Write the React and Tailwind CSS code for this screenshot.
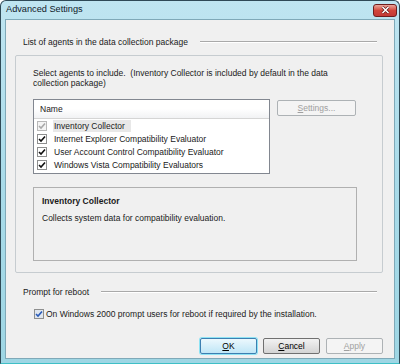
import React from "react";

const agents = [
  { name: "Inventory Collector", locked: true },
  { name: "Internet Explorer Compatibility Evaluator" },
  { name: "User Account Control Compatibility Evaluator" },
  { name: "Windows Vista Compatibility Evaluators" },
];

const CheckBox = ({ disabled, blue }) => (
  <span
    className={`flex shrink-0 items-center justify-center w-[10px] h-[10px] border ${
      disabled ? "border-[#b8b8b8] bg-[#f4f4f4]" : blue ? "border-[#8e8f8f] bg-[#dfe6ee]" : "border-[#8e8f8f] bg-white"
    }`}
  >
    <svg width="8" height="8" viewBox="0 0 8 8">
      <path
        d="M1 4 L3 6 L7 1.5"
        fill="none"
        stroke={disabled ? "#a8a8a8" : blue ? "#2a5bb8" : "#111"}
        strokeWidth="1.6"
      />
    </svg>
  </span>
);

const GroupTitle = ({ children }) => (
  <div className="flex items-center h-[14px] pl-[8px] pr-[6px]">
    <span className="whitespace-nowrap">{children}</span>
    <div className="flex-1 ml-[12px] h-[2px] border-t border-[#a9a9a9] border-b-white border-b" />
  </div>
);

const DialogButton = ({ children, kind }) => {
  const styles = {
    default: "border-[#3c7fb1] bg-gradient-to-b from-[#ecf8fd] to-[#bfe6f6] shadow-[0_0_0_1px_#8ee3f4] text-black",
    normal: "border-[#707070] bg-gradient-to-b from-[#f2f2f2] to-[#d4d4d4] text-black",
    disabled: "border-[#adb2b5] bg-[#f4f4f4] text-[#a0a0a0]",
  };
  return (
    <button className={`w-[57px] h-[16px] rounded-[2px] border ${styles[kind]} flex items-center justify-center text-[8.5px] leading-none`}>
      {children}
    </button>
  );
};

export default function App() {
  return (
    <div
      className="w-[400px] h-[364px] flex flex-col bg-gradient-to-b from-[#bfe5f1] via-[#a9dbe9] to-[#9ed6e4] border border-[#2f4a57] border-b-[#3fbfc6] rounded-t-[6px] overflow-hidden text-[#1a1a1a]"
      style={{ fontFamily: '"Liberation Sans", Arial, sans-serif' }}
    >
      {/* title bar */}
      <div className="h-[18px] flex items-center pl-[5px] pr-[2px] shrink-0">
        <span className="text-[9.2px] text-[#10202a]">Advanced Settings</span>
        <div className="ml-auto w-[24px] h-[13px] rounded-[3px] border border-[#6e1d1d] bg-gradient-to-b from-[#e9a59b] via-[#d1453b] to-[#c33a36] flex items-center justify-center">
          <svg width="9" height="8" viewBox="0 0 9 8">
            <path d="M1.5 1 L7.5 7 M7.5 1 L1.5 7" stroke="#5a1010" strokeWidth="2.8" />
            <path d="M1.5 1 L7.5 7 M7.5 1 L1.5 7" stroke="white" strokeWidth="1.6" />
          </svg>
        </div>
      </div>

      {/* client area */}
      <div className="flex-1 mx-[4px] mb-[4px] bg-[#f0f0f0] border border-[#7fa9b8] flex flex-col pt-[15px] pl-[9px] pr-[11px] pb-[4px] text-[8.5px] leading-[10px]">
        <GroupTitle>List of agents in the data collection package</GroupTitle>

        <div className="mt-[6px] h-[218px] border border-[#c6ccd0] rounded-[2px] flex flex-col pt-[13px] px-[17px]">
          <p className="leading-[9.5px]">
            Select agents to include.&nbsp; (Inventory Collector is included by default in the data
            collection package)
          </p>

          <div className="mt-[11px] flex gap-[7px] items-start">
            <div className="w-[237px] h-[75px] border border-[#828790] bg-white flex flex-col">
              <div className="h-[19px] shrink-0 flex items-center pl-[6px] bg-gradient-to-b from-white via-white to-[#f1f2f4] border-b border-[#d5d5d5]">
                Name
              </div>
              <div className="flex flex-col">
                {agents.map((a) => (
                  <div key={a.name} className="h-[13px] flex items-center pl-[3px]">
                    <CheckBox disabled={a.locked} />
                    <span className={`ml-[6px] px-[1px] h-[12px] flex items-center whitespace-nowrap ${a.locked ? "bg-[#e8e8e8] pr-[6px]" : ""}`}>
                      {a.name}
                    </span>
                  </div>
                ))}
              </div>
            </div>
            <button className="mt-[1px] w-[79px] h-[16px] rounded-[2px] border border-[#adb2b5] bg-[#f4f4f4] text-[#a0a0a0] flex items-center justify-center text-[8.5px]">
              <span>
                <u>S</u>ettings...
              </span>
            </button>
          </div>

          <div className="mt-[13px] w-[324px] h-[74px] border border-[#b0b0b0] pt-[8px] px-[8px]">
            <div className="font-bold">Inventory Collector</div>
            <div className="mt-[7px]">Collects system data for compatibility evaluation.</div>
          </div>
        </div>

        <div className="mt-[12px]">
          <GroupTitle>Prompt for reboot</GroupTitle>
        </div>

        <div className="mt-[9px] flex items-center pl-[19px] h-[11px]">
          <CheckBox blue />
          <span className="ml-[2px] whitespace-nowrap">On Windows 2000 prompt users for reboot if required by the installation.</span>
        </div>

        <div className="mt-auto flex justify-end gap-[6px]">
          <DialogButton kind="default">
            <span><u>O</u>K</span>
          </DialogButton>
          <DialogButton kind="normal">
            <span><u>C</u>ancel</span>
          </DialogButton>
          <DialogButton kind="disabled">
            <span><u>A</u>pply</span>
          </DialogButton>
        </div>
      </div>
    </div>
  );
}
